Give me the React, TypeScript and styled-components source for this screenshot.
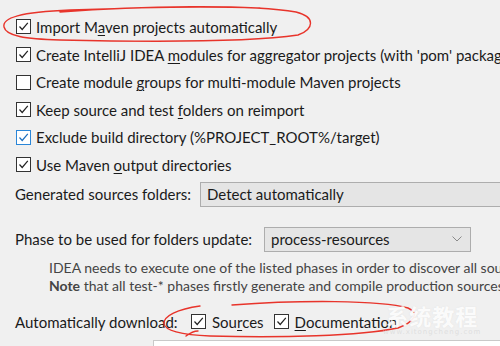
import React from 'react';
import styled, { createGlobalStyle } from 'styled-components';

const GlobalStyle = createGlobalStyle`
  html, body {
    margin: 0;
    padding: 0;
    background: #f0f0f0;
    overflow: hidden;
  }
  body {
    font-family: Lato, "Noto Sans", "Noto Sans CJK SC", sans-serif;
    color: #1b1b1b;
  }
`;

const Page = styled.div`
  position: relative;
  width: 500px;
  height: 346px;
  overflow: hidden;
  background: #f0f0f0;
`;

const Panel = styled.div`
  display: flex;
  flex-direction: column;
  padding: 13.2px 0 0 15px;
  font-size: 15px;
  white-space: nowrap;
`;

const CheckRow = styled.label`
  display: flex;
  align-items: center;
  gap: 5px;
  height: 27.6px;
  padding-left: 1px;
`;

const Box = styled.span<{ $focused?: boolean }>`
  flex: none;
  width: 15px;
  height: 15px;
  box-sizing: border-box;
  border: 1px solid ${p => (p.$focused ? '#2a86d8' : '#333')};
  background: #fff;
  display: flex;
  align-items: center;
  justify-content: center;
  color: ${p => (p.$focused ? '#1c6fbf' : '#222')};
`;

const Key = styled.u`
  text-underline-offset: 2px;
`;

const FieldRow = styled.div<{ $top: number }>`
  display: flex;
  align-items: center;
  height: 25px;
  margin-top: ${p => p.$top}px;
`;

const FieldLabel = styled.span<{ $width: number }>`
  width: ${p => p.$width}px;
  flex: none;
`;

const Combo = styled.div<{ $width?: number }>`
  flex: ${p => (p.$width ? 'none' : '1')};
  width: ${p => (p.$width ? `${p.$width}px` : 'auto')};
  height: 25px;
  box-sizing: border-box;
  border: 1px solid #adadad;
  background: #e5e5e5;
  display: flex;
  align-items: center;
  justify-content: space-between;
  padding: 0 8px 0 6px;
  margin-right: ${p => (p.$width ? '0' : '-20px')};
`;

const Help = styled.div`
  margin-top: 7px;
  padding-left: 34px;
  font-size: 14px;
  line-height: 18px;
  color: #444;
`;

const DownloadRow = styled.div`
  display: flex;
  align-items: center;
  height: 20px;
  margin-top: 17px;
`;

const Inline = styled.label`
  display: flex;
  align-items: center;
  gap: 6px;
  margin-right: 10px;
`;

const Bottom = styled.div`
  margin-top: 8px;
  margin-left: 138px;
  height: 30px;
  background: #fff;
  border-top: 1px solid #c9c9c9;
  border-left: 1px solid #c9c9c9;
`;

const Ink = styled.svg`
  position: absolute;
  left: 0;
  top: 0;
  pointer-events: none;
`;

const Watermark = styled.div`
  position: absolute;
  left: 383px;
  top: 302px;
  display: flex;
  flex-direction: column;
  align-items: center;
  color: rgba(255, 255, 255, 0.9);
  font-family: "Noto Sans CJK SC", sans-serif;
  font-size: 22px;
  font-weight: 700;
  line-height: 26px;
  letter-spacing: 1px;
  text-shadow: 0 0 1px rgba(205, 205, 205, 0.5);
`;

const WatermarkUrl = styled.span`
  font-family: "DejaVu Sans", sans-serif;
  font-size: 7px;
  font-weight: 400;
  line-height: 8px;
  color: rgba(215, 215, 215, 0.7);
  text-shadow: none;
`;

const Check = () => (
  <svg width="11" height="11" viewBox="0 0 11 11">
    <path d="M1.5 5.5 L4.2 8.5 L9.8 1.8" fill="none" stroke="currentColor" strokeWidth="1.2" />
  </svg>
);

const Chevron = () => (
  <svg width="10" height="6" viewBox="0 0 10 6">
    <path d="M0.5 0.5 L5 5 L9.5 0.5" fill="none" stroke="#8a8a8a" strokeWidth="1" />
  </svg>
);

const Option: React.FC<{ checked?: boolean; focused?: boolean; children: React.ReactNode }> = ({
  checked,
  focused,
  children,
}) => (
  <CheckRow>
    <Box $focused={focused}>{checked && <Check />}</Box>
    <span>{children}</span>
  </CheckRow>
);

export default function App() {
  return (
    <Page>
      <GlobalStyle />
      <Panel>
        <Option checked>
          Import M<Key>a</Key>ven projects automatically
        </Option>
        <Option checked>
          Create IntelliJ IDEA <Key>m</Key>odules for aggregator projects (with 'pom' packaging)
        </Option>
        <Option>
          Create module <Key>g</Key>roups for multi-module Maven projects
        </Option>
        <Option checked>
          Keep source and test <Key>f</Key>olders on reimport
        </Option>
        <Option checked focused>
          Exclude build directory (%PROJECT_ROOT%/target)
        </Option>
        <Option checked>
          Use Maven <Key>o</Key>utput directories
        </Option>

        <FieldRow $top={3.2}>
          <FieldLabel $width={185}>Generated sources folders:</FieldLabel>
          <Combo>
            <span>Detect automatically</span>
          </Combo>
        </FieldRow>

        <FieldRow $top={20}>
          <FieldLabel $width={249}>Phase to be used for folders update:</FieldLabel>
          <Combo $width={207}>
            <span>process-resources</span>
            <Chevron />
          </Combo>
        </FieldRow>

        <Help>
          <div>IDEA needs to execute one of the listed phases in order to discover all source folders</div>
          <div>
            <b>Note</b> that all test-* phases firstly generate and compile production sources
          </div>
        </Help>

        <DownloadRow>
          <FieldLabel $width={176}>Automatically download:</FieldLabel>
          <Inline>
            <Box>
              <Check />
            </Box>
            <span>
              Sou<Key>r</Key>ces
            </span>
          </Inline>
          <Inline>
            <Box>
              <Check />
            </Box>
            <span>
              <Key>D</Key>ocumentation
            </span>
          </Inline>
        </DownloadRow>

        <Bottom />
      </Panel>

      <Ink width="500" height="346" viewBox="0 0 500 346">
        <path
          d="M60 12 C140 6 250 4 296 12 C316 17 314 29 298 35 C250 42 150 42 60 40 C25 39 6 36 4 27 C2 18 20 12 70 10 C120 8 200 6 260 8"
          fill="none"
          stroke="#e8342b"
          strokeWidth="1.4"
          strokeLinecap="round"
        />
        <path
          d="M232 305 C300 300 380 300 408 308 C420 313 414 322 398 328 C360 336 280 338 210 336 C180 335 165 330 164 324 C163 316 178 309 200 306 M186 336 C190 333 195 331 198 331"
          fill="none"
          stroke="#e8342b"
          strokeWidth="1.4"
          strokeLinecap="round"
        />
      </Ink>
      <Watermark>
        <span>系统教程</span>
        <WatermarkUrl>www.xitongcheng.com</WatermarkUrl>
      </Watermark>
    </Page>
  );
}
